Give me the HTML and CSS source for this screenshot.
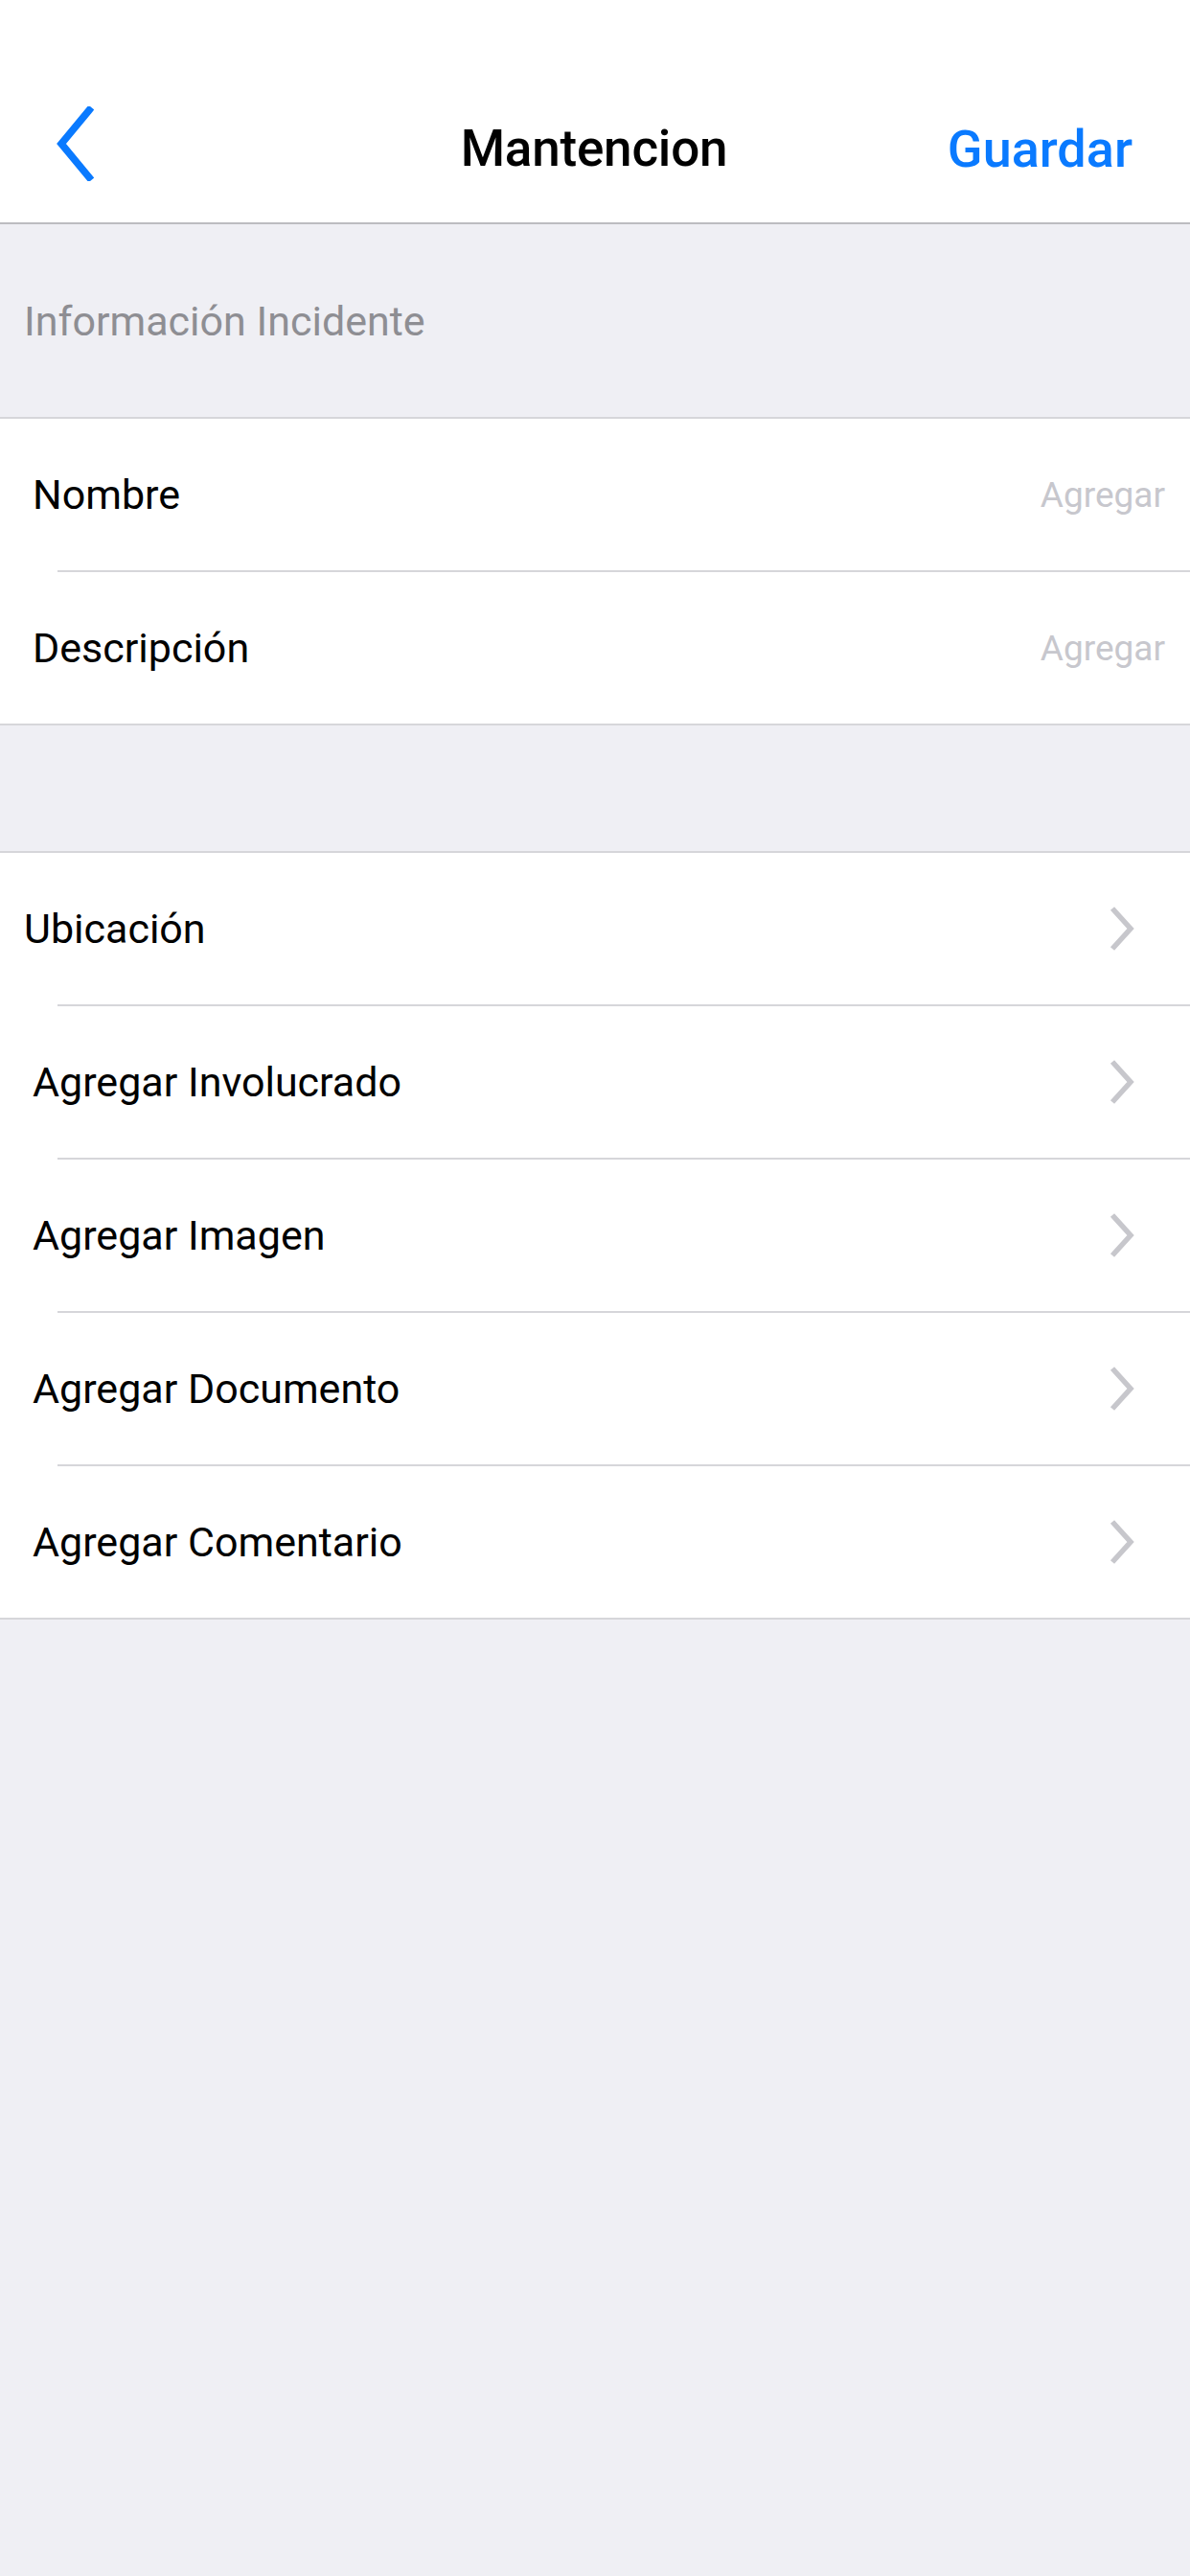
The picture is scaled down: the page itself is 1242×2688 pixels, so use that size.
FILE: index.html
```html
<!DOCTYPE html>
<html lang="es">
<head>
  <meta charset="UTF-8">
  <meta name="viewport" content="width=device-width, initial-scale=1.0">
  <title>Mantencion</title>
  <link rel="stylesheet" href="styles.css">
</head>
<body>

  <header class="navbar">
    <div class="navbar-row">
      <button class="nav-back" aria-label="Volver">
        <svg width="40" height="78" viewBox="0 0 40 78">
          <polyline points="35,4 6,39 35,74" fill="none" stroke="#0a7aff" stroke-width="7.5" stroke-linecap="square" stroke-linejoin="miter"/>
        </svg>
      </button>
      <div class="nav-title">Mantencion</div>
      <button class="nav-action">Guardar</button>
    </div>
  </header>

  <main class="content">
    <div class="section-header">Información Incidente</div>

    <div class="group">
      <div class="row">
        <span class="row-label">Nombre</span>
        <span class="row-value">Agregar</span>
      </div>
      <div class="sep"></div>
      <div class="row">
        <span class="row-label">Descripción</span>
        <span class="row-value">Agregar</span>
      </div>
    </div>

    <div class="group group-spaced">
      <div class="row row-tight">
        <span class="row-label">Ubicación</span>
        <span class="chevron"><svg width="26" height="48" viewBox="0 0 26 48"><polyline points="3,3 22,24 3,45" fill="none" stroke="#c7c7cc" stroke-width="5.5"/></svg></span>
      </div>
      <div class="sep"></div>
      <div class="row">
        <span class="row-label">Agregar Involucrado</span>
        <span class="chevron"><svg width="26" height="48" viewBox="0 0 26 48"><polyline points="3,3 22,24 3,45" fill="none" stroke="#c7c7cc" stroke-width="5.5"/></svg></span>
      </div>
      <div class="sep"></div>
      <div class="row">
        <span class="row-label">Agregar Imagen</span>
        <span class="chevron"><svg width="26" height="48" viewBox="0 0 26 48"><polyline points="3,3 22,24 3,45" fill="none" stroke="#c7c7cc" stroke-width="5.5"/></svg></span>
      </div>
      <div class="sep"></div>
      <div class="row">
        <span class="row-label">Agregar Documento</span>
        <span class="chevron"><svg width="26" height="48" viewBox="0 0 26 48"><polyline points="3,3 22,24 3,45" fill="none" stroke="#c7c7cc" stroke-width="5.5"/></svg></span>
      </div>
      <div class="sep"></div>
      <div class="row">
        <span class="row-label">Agregar Comentario</span>
        <span class="chevron"><svg width="26" height="48" viewBox="0 0 26 48"><polyline points="3,3 22,24 3,45" fill="none" stroke="#c7c7cc" stroke-width="5.5"/></svg></span>
      </div>
    </div>
  </main>

</body>
</html>
```

FILE: styles.css
```css
html, body {
  margin: 0;
  padding: 0;
}
body {
  font-family: 'Roboto', 'Liberation Sans', sans-serif;
  background: #efeff4;
  min-height: 100vh;
  color: #000;
}
button {
  border: none;
  background: none;
  padding: 0;
  font-family: inherit;
  cursor: pointer;
}

.navbar {
  background: #fff;
  height: 234px;
  box-sizing: border-box;
  padding-top: 72px;
  border-bottom: 2px solid #bcbcc0;
}
.navbar-row {
  height: 160px;
  display: flex;
  align-items: center;
  justify-content: space-between;
  padding: 0 60px 0 58px;
}
.nav-back {
  display: flex;
  width: 200px;
  margin-top: -4px;
}
.nav-title {
  font-size: 53px;
  font-weight: 500;
  letter-spacing: -0.2px;
  margin-top: 6px;
}
.nav-action {
  width: 200px;
  text-align: right;
  font-size: 54px;
  font-weight: 500;
  color: #0a7aff;
  margin-top: 6px;
}

.section-header {
  height: 201px;
  display: flex;
  align-items: center;
  padding-left: 25px;
  font-size: 43px;
  color: #8e8e93;
}

.group {
  background: #fff;
  border-top: 2px solid #d6d6da;
  border-bottom: 2px solid #d6d6da;
}
.group-spaced {
  margin-top: 131px;
}
.row {
  height: 158px;
  display: flex;
  align-items: center;
  justify-content: space-between;
  padding: 0 26px 0 34px;
}
.row-tight {
  padding-left: 25px;
}
.row-label {
  font-size: 43px;
}
.row-value {
  font-size: 37px;
  color: #c7c7cd;
}
.chevron {
  display: flex;
  margin-right: 32px;
}
.sep {
  height: 2px;
  margin-left: 60px;
  background: #d6d6da;
}
```
